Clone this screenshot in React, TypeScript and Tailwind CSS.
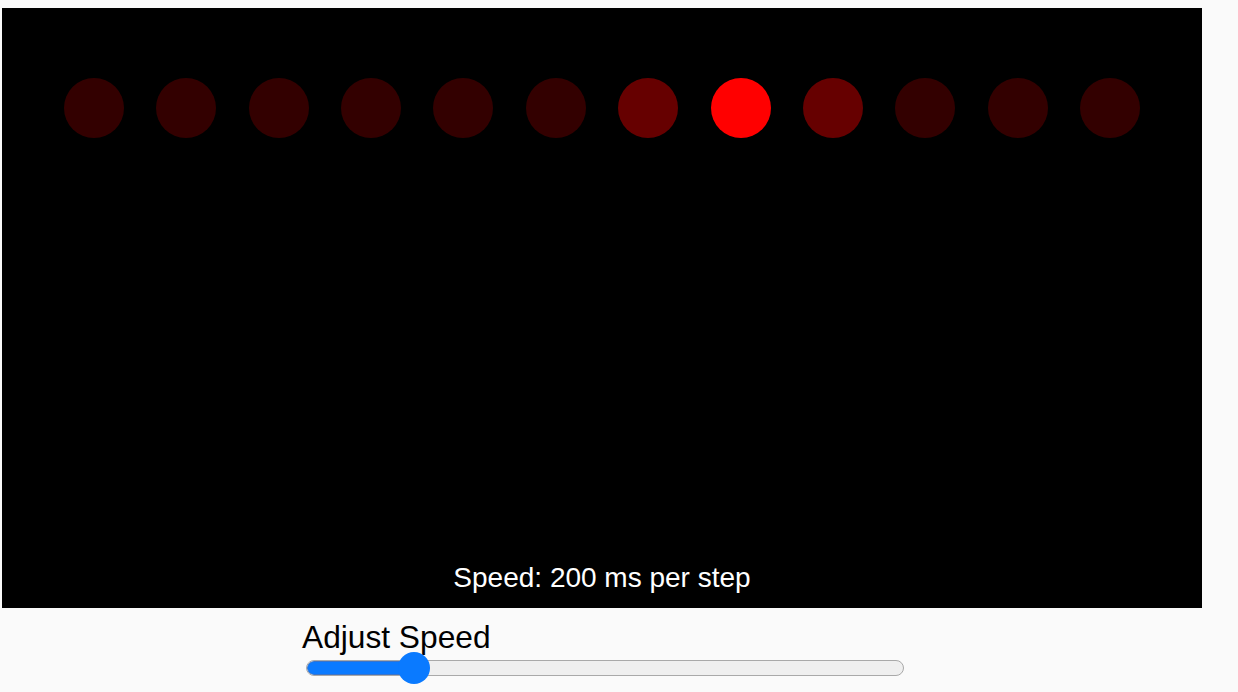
import React, { useState } from 'react';

const COUNT = 12;

function lightColor(i: number, active: number) {
  if (i === active) return 'bg-[#ff0000]';
  if (Math.abs(i - active) === 1) return 'bg-[#660000]';
  return 'bg-[#330000]';
}

export default function App() {
  const [active] = useState(7);
  const [speed] = useState(200);
  // thumb position on the track, 0..1
  const ratio = 0.16;

  return (
    <div className="min-h-screen w-full bg-[#fafafa] pt-[8px] font-['Liberation_Sans',Arial,sans-serif]">
      <div className="ml-[2px] w-[1200px]">
        <div className="flex h-[600px] flex-col justify-between bg-black pt-[70px] pb-[14px]">
          <div className="flex justify-center gap-[32.36px]">
            {Array.from({ length: COUNT }).map((_, i) => (
              <div key={i} className={`h-[60px] w-[60px] rounded-full ${lightColor(i, active)}`} />
            ))}
          </div>
          <p className="text-center text-[28px] leading-[32px] text-white">
            Speed: {speed} ms per step
          </p>
        </div>

        <div className="mx-auto mt-[11px] w-[600px]">
          <label className="block text-[31.7px] leading-[36px] text-black">Adjust Speed</label>
          <div className="relative -mt-[3px] ml-[4px] flex h-[32px] w-[598px] items-center">
            <div className="relative h-[16px] w-full overflow-hidden rounded-full border-[1.5px] border-[#a9a9a9] bg-[#efefef]">
              <div
                className="h-full rounded-full border-[1.5px] border-[#3a74c9] bg-[#0a7aff]"
                style={{ width: `${ratio * 566 + 22}px` }}
              />
            </div>
            <div
              className="absolute top-0 h-[32px] w-[32px] rounded-full bg-[#0a7aff]"
              style={{ left: `${ratio * 566 + 1}px` }}
            />
          </div>
        </div>
      </div>
    </div>
  );
}
